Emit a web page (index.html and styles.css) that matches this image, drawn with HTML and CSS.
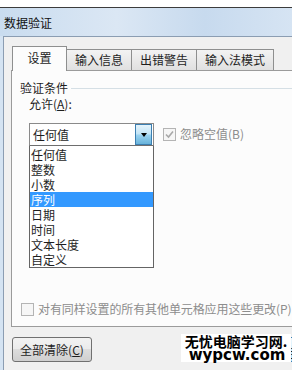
FILE: index.html
```html
<!DOCTYPE html>
<html lang="zh-CN">
<head>
    <meta charset="UTF-8">
    <title>数据验证</title>
    <link rel="stylesheet" href="styles.css">
</head>
<body>
    <div class="window">
        <div class="titlebar">数据验证</div>
        <div class="client">
            <div class="tabs">
                <div class="tab active">设置</div>
                <div class="tab t2">输入信息</div>
                <div class="tab t3">出错警告</div>
                <div class="tab t4">输入法模式</div>
            </div>
            <div class="panel">
                <div class="group-title"><span>验证条件</span></div>
                <div class="field-label">允许(<u>A</u>):</div>
                <div class="combo-row">
                    <div class="combo-col">
                        <div class="combo">
                            <span class="combo-text">任何值</span>
                            <span class="combo-btn"><span class="arrow"></span></span>
                        </div>
                        <ul class="list">
                            <li>任何值</li>
                            <li>整数</li>
                            <li>小数</li>
                            <li class="selected">序列</li>
                            <li>日期</li>
                            <li>时间</li>
                            <li>文本长度</li>
                            <li>自定义</li>
                        </ul>
                    </div>
                    <div class="check-item disabled">
                        <span class="checkbox checked">
                            <svg width="9" height="9" viewBox="0 0 9 9"><path d="M1 4.5 L3.5 7 L8 1.5" fill="none" stroke="#a8a8a8" stroke-width="1.6"/></svg>
                        </span>
                        <span>忽略空值(B)</span>
                    </div>
                </div>
                <div class="apply-row disabled">
                    <span class="checkbox"></span>
                    <span>对有同样设置的所有其他单元格应用这些更改(P)</span>
                </div>
            </div>
            <div class="footer">
                <button class="btn">全部清除(<u>C</u>)</button>
                <button class="btn ok"><span class="ok-label">确定</span></button>
                <div class="watermark">
                    <div class="wm-cn">无忧电脑学习网.</div>
                    <div class="wm-en">wypcw.com</div>
                </div>
            </div>
        </div>
    </div>
</body>
</html>
```

FILE: styles.css
```css
body {
    margin: 0;
    padding-top: 7px;
    width: 292px;
    height: 370px;
    overflow: hidden;
    background: #ffffff;
    font-family: "Noto Sans CJK SC", "Liberation Sans", sans-serif;
    font-size: 12px;
    color: #1e1e1e;
}
.window {
    border-top: 1px solid #3c3c3c;
    background: #d4e3f2;
    height: 362px;
    overflow: hidden;
}
.titlebar {
    height: 28px;
    line-height: 30px;
    padding-left: 4px;
    background: linear-gradient(to right, #c9dcef, #dbe7f4 40%, #c7daee 70%, #d6e4f3);
    color: #111;
}
.client {
    margin-left: 3px;
    border-left: 1px solid #8b9db2;
    border-top: 1px solid #8b9db2;
    background: #f0f0f0;
    height: 333px;
    overflow: hidden;
}
.tabs {
    display: flex;
    align-items: flex-end;
    height: 33px;
    padding-left: 8px;
}
.tab {
    position: relative;
    height: 20px;
    line-height: 20px;
    border: 1px solid #8e8f8f;
    border-bottom: none;
    background: linear-gradient(#f3f3f3, #e0e0e0);
    text-align: center;
    margin-left: -1px;
    box-sizing: content-box;
}
.tab.active {
    z-index: 1;
    height: 24px;
    line-height: 22px;
    margin-left: 0;
    margin-bottom: -1px;
    width: 53px;
    background: #fcfcfc;
}
.t2, .t3 {
    width: 64px;
}
.t4 {
    width: 76px;
}
.panel {
    margin-left: 7px;
    width: 300px;
    height: 255px;
    border: 1px solid #9b9b9b;
    background: #fcfcfc;
}
.group-title {
    display: flex;
    align-items: center;
    margin: 9px 0 0 8px;
    line-height: 16px;
}
.group-title::after {
    content: "";
    flex: 1;
    margin-left: 3px;
    border-top: 1px solid #d5dfe5;
}
.field-label {
    margin-left: 17px;
    line-height: 16px;
}
.combo-row {
    display: flex;
    align-items: flex-start;
    margin: 11px 0 0 17px;
}
.combo {
    display: flex;
    width: 123px;
    height: 21px;
    border: 1px solid #8a8a8a;
    border-bottom-color: #6e6e6e;
    background: #fff;
}
.combo-text {
    flex: 1;
    line-height: 21px;
    padding-left: 3px;
}
.combo-btn {
    display: flex;
    align-items: center;
    justify-content: center;
    width: 15px;
    margin: 0 1px 0 0;
    border: 1px solid #3c7fb1;
    background: linear-gradient(#e5f4fc, #c4e5f6 45%, #98d1ef 55%, #68b3db);
}
.arrow {
    width: 0;
    height: 0;
    border-left: 3px solid transparent;
    border-right: 3px solid transparent;
    border-top: 4px solid #000;
}
.list {
    list-style: none;
    margin: 0;
    padding: 1px 0 0;
    width: 123px;
    height: 120px;
    border: 1px solid #646464;
    border-top: none;
    background: #fff;
}
.list li {
    height: 15px;
    line-height: 15px;
    padding-left: 1px;
}
.list li.selected {
    background: #3399ff;
    color: #fff;
}
.check-item {
    display: flex;
    align-items: center;
    margin: 3px 0 0 9px;
    line-height: 16px;
}
.disabled {
    color: #8d8d8d;
}
.checkbox {
    display: inline-flex;
    align-items: center;
    justify-content: center;
    width: 11px;
    height: 11px;
    border: 1px solid #b4b4b4;
    background: #f6f6f6;
    margin-right: 4px;
}
.apply-row {
    display: flex;
    align-items: center;
    margin: 33px 0 0 9px;
    line-height: 16px;
    white-space: nowrap;
    letter-spacing: -0.1px;
}
.footer {
    position: relative;
    display: flex;
    margin: 10px 0 0 8px;
}
.btn {
    flex-shrink: 0;
    width: 80px;
    height: 25px;
    padding: 0;
    border: 1px solid #707070;
    border-radius: 3px;
    background: linear-gradient(#f2f2f2, #ebebeb 50%, #dddddd 50%, #cfcfcf);
    font-family: "Noto Sans CJK SC", "Liberation Sans", sans-serif;
    font-size: 12px;
    color: #1e1e1e;
}
.ok {
    margin-left: 146px;
    width: 75px;
    border-color: #3c7fb1;
    background: linear-gradient(#eaf6fd, #d9f0fc 50%, #bee6fd 50%, #a7d9f5);
}
.ok-label {
    position: relative;
    top: 3px;
    left: 8px;
}
.watermark {
    position: absolute;
    left: 169px;
    top: -3px;
    width: 110px;
    height: 28px;
    background: #ffffff;
    text-align: center;
    color: #000;
    font-weight: bold;
}
.wm-cn {
    font-size: 14px;
    line-height: 14px;
}
.wm-en {
    font-family: "DejaVu Sans", sans-serif;
    font-size: 15px;
    line-height: 14px;
    padding-left: 2px;
}
```
